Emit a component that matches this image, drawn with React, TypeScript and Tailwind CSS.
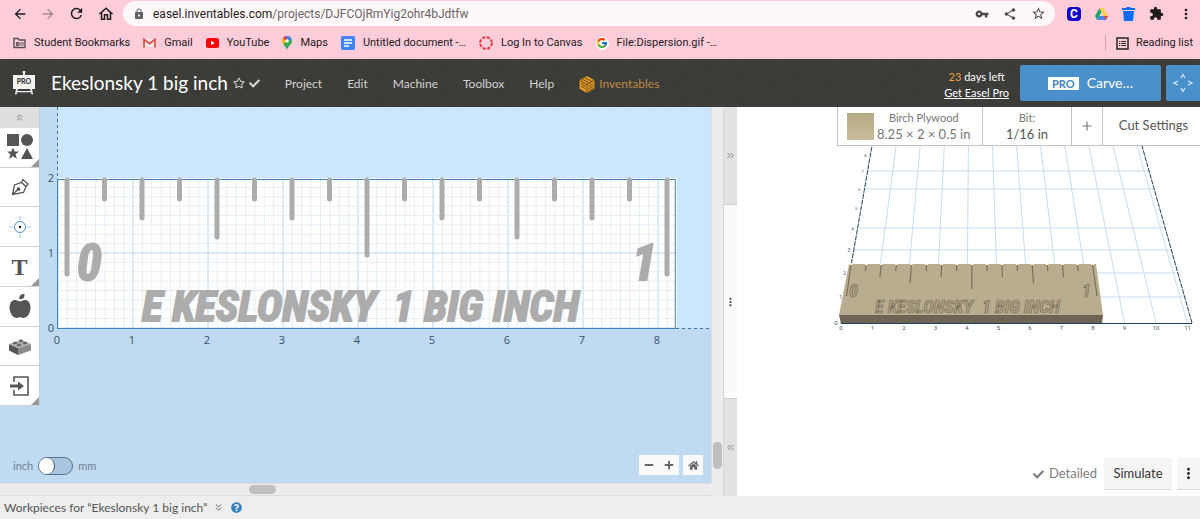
import React from 'react';
import { ChevronsDown, ChevronsLeft, ChevronsRight, ChevronsUp, Plus } from 'lucide-react';
import { FaAppleAlt, FaCheck, FaHome, FaMinus, FaPlus, FaQuestionCircle, FaRegStar } from 'react-icons/fa';
import { FcGoogle } from 'react-icons/fc';
import {
  MdArrowBack,
  MdArrowForward,
  MdExtension,
  MdLock,
  MdMoreVert,
  MdOutlineHome,
  MdRefresh,
  MdShare,
  MdStarBorder,
  MdVpnKey,
} from 'react-icons/md';

function FolderIcon() {
  return (
    <svg width="13" height="12" viewBox="0 0 13 12" fill="none" stroke="#555058">
      <path d="M1 1.500h4l1.300 1.500H12v7.500H1z" strokeWidth="1.400" />
      <path d="M3.500 5.500h2.500v3H3.500z" fill="#b0858f" />
      <path d="M8 5v3.500M10 5v3.500" />
    </svg>
  );
}

function GmailIcon() {
  return (
    <svg width="13" height="10" viewBox="0 0 14 11">
      <path d="M1 1h12v9H1z" fill="#f3e4e8" />
      <path d="M1 10.500V1.500l6 4.700 6-4.700v9" fill="none" stroke="#d54b3d" strokeWidth="1.800" />
    </svg>
  );
}

function YouTubeIcon() {
  return (
    <svg width="13" height="10" viewBox="0 0 13 10">
      <rect width="13" height="10" rx="2.500" fill="#f00" />
      <path d="M5 2.800v4.400L8.800 5z" fill="#fff" />
    </svg>
  );
}

function MapsIcon() {
  return (
    <svg width="10" height="14" viewBox="0 0 10 14">
      <path d="M5 0a5 5 0 0 0-5 5c0 3.500 4 5 5 9 1-4 5-5.500 5-9a5 5 0 0 0-5-5z" fill="#34a853" />
      <path d="M1.200 1.700 5 5 1 8.300A6 6 0 0 1 0 5a5 5 0 0 1 1.200-3.300z" fill="#fbbc04" />
      <path d="M1.200 1.700A5 5 0 0 1 3.500.2L6.500 3 3.500 5.500z" fill="#ea4335" />
      <path d="M3.500.2A5 5 0 0 1 9.500 3L5.500 6 5 3z" fill="#4285f4" />
      <circle cx="5" cy="5" r="1.800" fill="#fff" />
    </svg>
  );
}

function DocsIcon() {
  return (
    <svg width="14" height="14" viewBox="0 0 14 14">
      <rect width="14" height="14" rx="1.500" fill="#4285f4" />
      <path d="M3 4h8M3 7h8M3 10h5" stroke="#fff" strokeWidth="1.500" />
    </svg>
  );
}

function CanvasIcon() {
  return (
    <svg width="14" height="14" viewBox="0 0 14 14">
      <circle cx="7" cy="7" r="5.900" fill="none" stroke="#e03a3e" strokeWidth="2" strokeDasharray="3.200 1.430" />
    </svg>
  );
}

function GoogleIcon() {
  return (
    <span className="flex size-[13px] items-center justify-center rounded-full bg-white">
      <FcGoogle size={12} />
    </span>
  );
}

function DriveIcon() {
  return (
    <svg width="13" height="12" viewBox="0 0 13 12">
      <path d="M4.500 0 0 8l2.200 4L6.500 4z" fill="#1fa463" />
      <path d="M4.500 0h4L13 8H8.800z" fill="#ffcf48" />
      <path d="M4.300 8H13l-2.200 4H2.200z" fill="#4688f4" />
      <path d="M8.800 8H13l-2.200 4z" fill="#ea4335" />
    </svg>
  );
}

function TrashIcon() {
  return (
    <svg width="13" height="14" viewBox="0 0 13 14" fill="#0a6cf5">
      <path d="M0 1h4l.8-1h3.400L9 1h4v2H0zM1 4h11l-1 10H2z" />
    </svg>
  );
}

function ReadingListIcon() {
  return (
    <svg width="13" height="13" viewBox="0 0 13 13" fill="none" stroke="#222">
      <rect x="1" y="1" width="11" height="11" strokeWidth="1.500" />
      <path d="M3 4.500h1.300M3 6.500h1.300M3 8.500h1.300M5.300 4.500H10M5.300 6.500H10M5.300 8.500H10" />
    </svg>
  );
}

const bookmarks = [
  { label: 'Student Bookmarks', icon: <FolderIcon /> },
  { label: 'Gmail', icon: <GmailIcon /> },
  { label: 'YouTube', icon: <YouTubeIcon /> },
  { label: 'Maps', icon: <MapsIcon /> },
  { label: 'Untitled document -…', icon: <DocsIcon /> },
  { label: 'Log In to Canvas', icon: <CanvasIcon /> },
  { label: 'File:Dispersion.gif -…', icon: <GoogleIcon /> },
];

function BrowserBar() {
  return (
    <div className="bg-[#ffccd9] font-['Roboto',sans-serif] text-[#1f1a1c]">
      <div className="flex h-[27px] items-center pr-[6px] pl-3">
        <div className="flex items-center gap-3">
          <button aria-label="Back"><MdArrowBack size={16} /></button>
          <button aria-label="Forward" className="text-[#a38690]"><MdArrowForward size={16} /></button>
          <button aria-label="Reload"><MdRefresh size={17} /></button>
          <button aria-label="Home"><MdOutlineHome size={18} /></button>
        </div>
        <div className="ml-2 flex h-[25px] flex-1 items-center rounded-full bg-[#fff8fa] pr-[9px] pl-[10px]">
          <MdLock size={12} className="text-[#5f6368]" />
          <div className="ml-2 flex-1 text-xs text-[#6b6367]">
            <span className="text-[#1f1a1c]">easel.inventables.com</span>/projects/DJFCOjRmYig2ohr4bJdtfw
          </div>
          <div className="flex items-center gap-[14px] text-[#4a4548]">
            <button aria-label="Passwords"><MdVpnKey size={14} /></button>
            <button aria-label="Share"><MdShare size={14} /></button>
            <button aria-label="Bookmark this page"><MdStarBorder size={15} /></button>
          </div>
        </div>
        <div className="ml-3 flex items-center gap-[14px]">
          <button className="flex size-[14px] items-center justify-center rounded-sm bg-[#1006c8] text-xs font-bold text-white">C</button>
          <button aria-label="Drive"><DriveIcon /></button>
          <button aria-label="Clear"><TrashIcon /></button>
          <button aria-label="Extensions"><MdExtension size={15} /></button>
          <button aria-label="Menu"><MdMoreVert size={16} /></button>
        </div>
      </div>
      <div className="flex h-8 items-center gap-[13px] pr-[7px] pl-[13px] text-[11px]">
        {bookmarks.map(b => (
          <a key={b.label} href="#" className="flex items-center gap-2 whitespace-nowrap">
            {b.icon}
            {b.label}
          </a>
        ))}
        <button className="ml-auto flex items-center gap-[7px] border-l border-[#d3a5b2] pl-[10px]">
          <ReadingListIcon />
          Reading list
        </button>
      </div>
    </div>
  );
}

function EaselLogo() {
  return (
    <svg width="24" height="24" viewBox="0 0 24 24" fill="#f3f3f3">
      <path d="M11 2a1.400 1.400 0 1 1 2 0v2h-2z" />
      <rect x="1" y="4" width="22" height="14" />
      <path d="M4 18h2l-1.500 5.500H3zM18 18h2l1 5.500h-1.500zM5 20h14v1.300H5z" />
      <text x="12" y="13" textAnchor="middle" fontFamily="Lato, sans-serif" fontSize="7" fontWeight="900" fill="#3a3a38">PRO</text>
    </svg>
  );
}

function InventablesIcon() {
  return (
    <svg width="16" height="17" viewBox="0 0 16 17">
      <path d="M8 0l7.500 4.200v8.600L8 17 .5 12.800V4.200z" fill="#e59a22" />
      <path d="M8 8.500V17M.5 4.200 8 8.500l7.500-4.300M3 3l7.500 4M5.500 1.500 13 5.500M2 7.500l4.500 2.500M2 10l4.500 2.500M9.500 10.500l5-3M9.500 13l5-3M9.500 15.300l5-3" stroke="#4d3a1c" strokeWidth=".8" fill="none" />
    </svg>
  );
}

function JogIcon() {
  return (
    <svg width="20" height="20" viewBox="0 0 20 20" fill="none" stroke="#d5e7f7" strokeWidth="1.200">
      <path d="M8 5l2-3.500L12 5M8 15l2 3.500 2-3.500M5 8l-4 2 4 2M15 8l4 2-4 2" />
    </svg>
  );
}

function Header() {
  return (
    <header className="flex h-12 items-center overflow-hidden bg-[#3b3b38] bg-[repeating-linear-gradient(60deg,#ffffff03_0px,#ffffff03_4px,transparent_6px,transparent_12px)] pl-3 text-[#d2d2d0]">
      <EaselLogo />
      <h1 className="ml-[15px] text-[19px] leading-6 whitespace-nowrap text-white">Ekeslonsky 1 big inch</h1>
      <button aria-label="Favorite" className="ml-[5px]"><FaRegStar size={12} /></button>
      <FaCheck size={11} className="ml-1" />
      <nav className="ml-[25px] flex items-center gap-[25px] pt-[2px] text-xs">
        <a href="#">Project</a>
        <a href="#">Edit</a>
        <a href="#">Machine</a>
        <a href="#">Toolbox</a>
        <a href="#">Help</a>
        <a href="#" className="flex items-center gap-1 text-[#bf8a45]">
          <InventablesIcon />
          Inventables
        </a>
      </nav>
      <div className="ml-auto flex flex-col items-center pt-1 text-[11px] leading-4 whitespace-nowrap text-white">
        <span><span className="text-[#e8a33c]">23</span> days left</span>
        <a href="#" className="underline">Get Easel Pro</a>
      </div>
      <button className="ml-[11px] flex h-9 w-[141px] items-center justify-center gap-2 rounded-xs bg-[#4a90cb] text-sm text-white">
        <span className="bg-white px-1 text-[11px] leading-[13px] font-bold text-[#4285bd]">PRO</span>
        Carve…
      </button>
      <button aria-label="Jog machine" className="ml-[5px] flex h-9 w-[34px] items-center justify-center rounded-l-xs bg-[#4a90cb]">
        <JogIcon />
      </button>
    </header>
  );
}

const tools = [
  {
    label: 'Shapes',
    menu: true,
    icon: (
      <svg width="26" height="26" viewBox="0 0 26 26" fill="#555">
        <rect width="12" height="12" />
        <circle cx="20" cy="6" r="6" />
        <path d="M6 13.500l1.700 4H12l-3.400 2.800 1.300 4.700L6 22.300 2.100 25l1.300-4.700L0 17.500h4.300zM20 14l6 11H14z" />
      </svg>
    ),
  },
  {
    label: 'Pen',
    icon: (
      <svg width="18" height="18" viewBox="0 0 18 18" fill="none" stroke="#555" strokeWidth="1.300">
        <path d="M1.500 16.500 3.500 7l7-2.500 4.500 4-2.500 6zM10.500 4.500 12 1.500l5 4.500-2 2.500M1.500 16.500 7 11.500" />
        <circle cx="7.500" cy="11" r="1.200" fill="#555" />
      </svg>
    ),
  },
  {
    label: 'Drill',
    icon: (
      <svg width="22" height="22" viewBox="0 0 22 22" fill="none" stroke="#4a90d0">
        <circle cx="11" cy="11" r="5.500" />
        <path d="M11 0v4M11 18v4M0 11h4M18 11h4" stroke="#9cc5ea" />
        <circle cx="11" cy="11" r="1.200" fill="#111" stroke="none" />
      </svg>
    ),
  },
  {
    label: 'Text',
    menu: true,
    icon: <span className="font-['Liberation_Serif',serif] text-2xl font-bold">T</span>,
  },
  { label: 'Icons', icon: <FaAppleAlt size={24} /> },
  {
    label: 'Apps',
    icon: (
      <svg width="22" height="18" viewBox="0 0 22 18">
        <path d="M0 7 9 11v7L0 13.500z" fill="#555" />
        <path d="M9 11l13-4v6.500L9 18z" fill="#8a8a8a" />
        <path d="M0 7l12-4 10 4L9 11z" fill="#aaa" />
        <g fill="#666">
          <ellipse cx="6" cy="6" rx="2.200" ry="1.300" />
          <ellipse cx="12" cy="3.800" rx="2.200" ry="1.300" />
          <ellipse cx="10" cy="8" rx="2.200" ry="1.300" />
          <ellipse cx="16" cy="6" rx="2.200" ry="1.300" />
        </g>
      </svg>
    ),
  },
  {
    label: 'Import',
    menu: true,
    icon: (
      <svg width="20" height="20" viewBox="0 0 20 20" fill="none" stroke="#555">
        <path d="M4 6V1h14v18H4v-5" strokeWidth="1.600" />
        <path d="M0 10h9" strokeWidth="3" />
        <path d="M8 5.500l6 4.500-6 4.500z" fill="#555" stroke="none" />
      </svg>
    ),
  },
];

function Toolbar() {
  return (
    <div className="flex w-10 shrink-0 flex-col self-start border-r border-[#c9cfd4] text-[#555]">
      <button aria-label="Collapse toolbar" className="flex h-[21px] items-center justify-center bg-[#dedede] text-[#777]">
        <ChevronsUp size={11} />
      </button>
      <div className="flex h-[278px] flex-col">
        {tools.map(t => (
          <button
            key={t.label}
            aria-label={t.label}
            className="relative flex flex-1 items-center justify-center border-b border-[#cfcfcf] bg-white"
          >
            {t.icon}
            {t.menu && (
              <svg width="8" height="8" className="absolute right-0 bottom-0">
                <path d="M8 0v8H0z" fill="#999" />
              </svg>
            )}
          </button>
        ))}
      </div>
    </div>
  );
}

const UNIT = 75;
const ORIGIN_X = 18;
const ORIGIN_Y = 221;
const BOARD_W = 8.25 * UNIT;
const BOARD_H = 2 * UNIT;

// ruler marks every half unit, longer on the quarters
function markLength(i: number) {
  if (i % 16 === 0) return 94;
  if (i % 8 === 0) return 75;
  if (i % 4 === 0) return 57;
  if (i % 2 === 0) return 38;
  return 19;
}

const marks = Array.from({ length: 17 }, (_, i) => ({ x: ORIGIN_X + 9 + i * 37.5, len: markLength(i) }));

const LETTERING = "'Liberation Sans Narrow', 'Roboto Condensed', Lato, sans-serif";

function DesignCanvas() {
  return (
    <svg className="h-full min-w-0 flex-1 overflow-hidden" width="100%" height="100%">
      <rect x={ORIGIN_X} y="0" width="100%" height={ORIGIN_Y} fill="#cce6fd" />
      <rect x={ORIGIN_X} y={ORIGIN_Y - BOARD_H} width={BOARD_W} height={BOARD_H} fill="#fff" />
      {Array.from({ length: 66 }, (_, i) => (
        <line
          key={i}
          x1={ORIGIN_X + i * 9.375}
          x2={ORIGIN_X + i * 9.375}
          y1={ORIGIN_Y - BOARD_H}
          y2={ORIGIN_Y}
          stroke={i % 8 === 0 ? '#b9d6f0' : '#e6eff5'}
        />
      ))}
      {Array.from({ length: 16 }, (_, i) => (
        <line
          key={i}
          x1={ORIGIN_X}
          x2={ORIGIN_X + BOARD_W}
          y1={ORIGIN_Y - i * 9.375}
          y2={ORIGIN_Y - i * 9.375}
          stroke={i % 8 === 0 ? '#b9d6f0' : '#e6eff5'}
        />
      ))}
      <line x1={ORIGIN_X - 0.5} x2={ORIGIN_X - 0.5} y1="0" y2={ORIGIN_Y} stroke="#3a77ad" strokeDasharray="3 3" />
      <line x1={ORIGIN_X} x2="100%" y1={ORIGIN_Y + 0.5} y2={ORIGIN_Y + 0.5} stroke="#3a77ad" strokeDasharray="3 3" />
      <rect x={ORIGIN_X - 0.5} y={ORIGIN_Y - BOARD_H + 1.5} width={BOARD_W - 1} height={BOARD_H - 1} fill="none" stroke="#3c83c0" />
      {marks.map(m => (
        <line key={m.x} x1={m.x} x2={m.x} y1="73" y2={73 + m.len} stroke="#acacac" strokeWidth="5" strokeLinecap="round" />
      ))}
      <g fill="#acacac" stroke="#acacac" strokeWidth="2" fontFamily={LETTERING} fontWeight="700" fontStyle="italic">
        <text x="37" y="173" fontSize="50">0</text>
        <text x="592" y="173" fontSize="50">1</text>
        <g fontSize="43">
          <text x="102" y="214">E KESLONSKY</text>
          <text x="353" y="214">1 BIG INCH</text>
        </g>
      </g>
      <g fontFamily="'Open Sans', sans-serif" fontSize="11" fill="#33526b">
        {[0, 1, 2].map(n => (
          <text key={n} x="14" y={ORIGIN_Y + 4 - n * UNIT} textAnchor="end">{n}</text>
        ))}
        {[0, 1, 2, 3, 4, 5, 6, 7, 8].map(n => (
          <text key={n} x={ORIGIN_X - 1 + n * UNIT} y="237" textAnchor="middle">{n}</text>
        ))}
      </g>
    </svg>
  );
}

function Workspace() {
  return (
    <section className="grid min-w-0 flex-[723] grid-cols-[1fr_12px] grid-rows-[1fr_13px] bg-[#ececee]">
      <div className="relative flex min-h-0 min-w-0 bg-[#bfdaf1]">
        <Toolbar />
        <DesignCanvas />
        <label className="absolute bottom-2 left-[13px] flex items-center gap-[5px] text-[11px] text-[#71838f]">
          inch
          <input
            type="checkbox"
            aria-label="Use millimeters"
            className="h-[18px] w-[35px] appearance-none rounded-full border border-[#5b7185] bg-[#a9c5df] before:block before:size-4 before:rounded-full before:border-r before:border-[#44525e] before:bg-white"
          />
          mm
        </label>
        <div className="absolute right-2 bottom-2 flex gap-1 text-[#666]">
          <div className="flex h-5 bg-[#f8fafb]">
            <button aria-label="Zoom out" className="flex w-5 items-center justify-center"><FaMinus size={10} /></button>
            <button aria-label="Zoom in" className="flex w-5 items-center justify-center"><FaPlus size={10} /></button>
          </div>
          <button aria-label="Reset view" className="flex size-5 items-center justify-center bg-[#f8fafb]"><FaHome size={11} /></button>
        </div>
      </div>
      <div className="flex flex-col justify-end border-l border-[#dddee0] px-px pb-[14px]">
        <div className="h-[27px] rounded-full bg-[#bfbfc0]" />
      </div>
      <div className="border-y border-[#dcdcdc] pt-px pl-[249px]">
        <div className="h-[9px] w-[27px] rounded-full bg-[#bfbfc0]" />
      </div>
    </section>
  );
}

function Divider() {
  return (
    <div className="flex w-[14px] shrink-0 flex-col border-l border-[#d6d6d6] text-[#777]">
      <button aria-label="Expand design" className="flex flex-1 items-center justify-center bg-[#e2e2e2]"><ChevronsRight size={11} /></button>
      <div className="flex flex-[2] items-center justify-center border-y border-[#cfcfcf] bg-[#fafafa] text-[#444]"><MdMoreVert size={14} /></div>
      <button aria-label="Expand preview" className="flex flex-1 items-center justify-center bg-[#e2e2e2]"><ChevronsLeft size={11} /></button>
    </div>
  );
}

const bedRows = [151, 127, 104, 82, 62, 43, 25, 9];

// x of the left and right bed edges at a height in the drawing
const bedLeft = (y: number) => 104 + ((177 - y) / 177) * 31;
const bedRight = (y: number) => 455 - ((177 - y) / 177) * 50;

function BedPreview() {
  return (
    <svg width="463" height="200" className="shrink-0 overflow-hidden">
      <g stroke="#c6ddf0">
        {Array.from({ length: 11 }, (_, i) => (
          <line key={i} x1={104 + (i + 1) * 31.5} y1="177" x2={135 + (i + 1) * 24.1} y2="0" />
        ))}
        {[151, 127, 104, 82, 43, 25].map(y => (
          <line key={y} x1={bedLeft(y)} x2={bedRight(y)} y1={y} y2={y} />
        ))}
      </g>
      <g stroke="#21405f">
        <path d="M104 177 135 0M455 177 405 0" strokeDasharray="5 1" />
        <path d="M104 177.500h351" />
      </g>
      <path d="M112 118h247l7 51H102z" fill="#b9ad8f" />
      <path d="M102 169h264l-1 8H104z" fill="#6d6453" />
      {marks.map((m, i) => {
        const top = 114 + i * 15.1;
        const len = [0, 16].includes(i) ? 31 : m.len * 0.32;
        return (
          <g key={i}>
            <circle cx={top} cy="118" r="1.300" fill="#fff" />
            <line x1={top} y1="119" x2={top + (i - 8) * len * 0.018} y2={119 + len} stroke="#7a705a" strokeWidth="1.200" />
          </g>
        );
      })}
      <g fontFamily={LETTERING} fontStyle="italic" fontWeight="700" fill="#aea286" stroke="#776d57" strokeWidth=".7">
        <text x="112" y="151" fontSize="18">0</text>
        <text x="345" y="151" fontSize="18">1</text>
        <g fontSize="18">
          <text x="138" y="167">E KESLONSKY</text>
          <text x="245" y="167">1 BIG INCH</text>
        </g>
      </g>
      <g fontFamily="Roboto, sans-serif" fontSize="6" fill="#49596a" textAnchor="middle">
        {Array.from({ length: 12 }, (_, n) => (
          <text key={n} x={104 + n * 31.5} y="184">{n}</text>
        ))}
        {bedRows.map((y, n) => (
          <text key={y} x={bedLeft(y) - 5} y={y + 2} fontSize={n < 3 ? 5 : 4}>{n + 1}</text>
        ))}
        <text x="99" y="179">0</text>
      </g>
    </svg>
  );
}

function Preview() {
  return (
    <section className="relative flex min-w-0 flex-[463] flex-col overflow-hidden bg-white">
      <div className="flex h-[39px] w-[363px] shrink-0 self-end border-b border-l border-[#c4c4c4] text-[#777]">
        <button className="flex flex-1 items-center gap-[3px] border-r border-[#c4c4c4] pl-[9px] whitespace-nowrap">
          <span className="size-[27px] bg-linear-to-b from-[#b5ab86] to-[#c8bd9a]" />
          <span className="flex flex-col items-center">
            <span className="text-[11px] leading-4">Birch Plywood</span>
            <span className="text-[13px] leading-4">8.25 × 2 × 0.5 in</span>
          </span>
        </button>
        <button className="flex w-[89px] flex-col items-center justify-center border-r border-[#c4c4c4]">
          <span className="text-[11px] leading-4">Bit:</span>
          <span className="text-[13px] leading-4 text-[#555]">1/16 in</span>
        </button>
        <button aria-label="Add bit" className="flex w-[31px] items-center justify-center border-r border-[#c4c4c4]">
          <Plus size={14} strokeWidth={2} />
        </button>
        <button className="w-[97px] pl-1 text-[13px] whitespace-nowrap text-[#555]">Cut Settings</button>
      </div>
      <BedPreview />
      <div className="absolute right-0 bottom-[6px] flex items-center gap-[5px]">
        <button className="mr-[2px] flex items-center gap-[5px] text-[13px] text-[#7d7d7d]">
          <FaCheck size={11} />
          Detailed
        </button>
        <button className="h-8 w-[68px] border-b border-[#dcdcdc] bg-[#f5f5f5] text-[13px] text-[#333]">Simulate</button>
        <button aria-label="More options" className="flex h-8 w-[23px] items-center justify-center border-b border-[#dcdcdc] bg-[#f5f5f5] text-[#222]">
          <MdMoreVert size={17} />
        </button>
      </div>
    </section>
  );
}

export default function App() {
  return (
    <div className="flex h-screen flex-col overflow-hidden font-['Lato',sans-serif]">
      <BrowserBar />
      <Header />
      <main className="flex min-h-0 flex-1">
        <Workspace />
        <Divider />
        <Preview />
      </main>
      <footer className="flex h-[23px] shrink-0 items-center bg-[#eee] pl-1 text-xs text-[#555]">
        Workpieces for “Ekeslonsky 1 big inch”
        <button aria-label="Show workpieces" className="ml-[6px]"><ChevronsDown size={11} /></button>
        <button aria-label="Help" className="ml-[7px] text-[#3583bd]"><FaQuestionCircle size={11} /></button>
      </footer>
    </div>
  );
}
